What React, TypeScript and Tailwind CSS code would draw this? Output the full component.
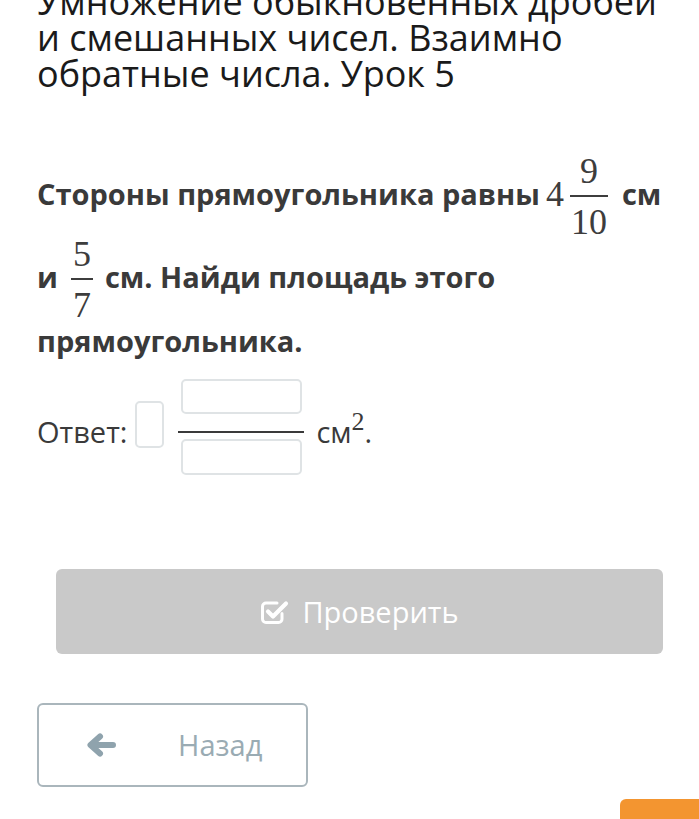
const sans = { fontFamily: '"Open Sans", "Noto Sans", sans-serif' };

function Frac({ top, bottom, w }: { top: string; bottom: string; w: string }) {
  return (
    <span className="inline-flex flex-col items-center font-['Liberation_Serif',serif] text-[36px] font-normal leading-[26px] text-[#3d3d3d]">
      <span className="pb-[11px]">{top}</span>
      <span className={`h-[2px] bg-[#3d3d3d] ${w}`} />
      <span className="pt-[12px]">{bottom}</span>
    </span>
  );
}

function CheckSquare() {
  return (
    <svg width="30" height="30" viewBox="0 0 30 30" fill="none">
      <path d="M22 16.5V22a3.5 3.5 0 0 1-3.5 3.5H6A3.5 3.5 0 0 1 2.5 22V9.5A3.5 3.5 0 0 1 6 6h11" stroke="white" strokeWidth="3" strokeLinecap="round" />
      <path d="M8 14.5l5 5L26 6.5" stroke="white" strokeWidth="4.2" strokeLinecap="round" strokeLinejoin="round" />
    </svg>
  );
}

function ArrowLeft() {
  return (
    <svg width="30" height="26" viewBox="0 0 30 26" fill="none">
      <path d="M27 13H6M14 4.5L4.5 13l9.5 8.5" stroke="#8fa3ad" strokeWidth="6" strokeLinecap="round" strokeLinejoin="round" />
    </svg>
  );
}

export default function App() {
  return (
    <div className="min-h-[819px] overflow-hidden bg-white" style={sans}>
      <div className="px-[37px]">
        <h1 className="mt-[-16px] text-[36px] font-normal leading-[36px] text-[#1a1a1a]">
          Умножение обыкновенных дробей и смешанных чисел. Взаимно обратные числа. Урок 5
        </h1>

        <div className="mt-[60px] whitespace-nowrap text-[29px] font-bold leading-[40px] text-[#3a3a3a]">
          <div className="flex items-center">
            <span className="shrink-0">Стороны прямоугольника равны</span>
            <span className="ml-[6px] shrink-0 font-['Liberation_Serif',serif] text-[36px] font-normal text-[#3d3d3d]">4</span>
            <span className="ml-[6px] shrink-0">
              <Frac top="9" bottom="10" w="w-[38px]" />
            </span>
            <span className="ml-[14px] shrink-0">см</span>
          </div>
          <div className="flex items-center">
            <span>и</span>
            <span className="ml-[13px]">
              <Frac top="5" bottom="7" w="w-[22px]" />
            </span>
            <span className="ml-[12px]">см. Найди площадь этого</span>
          </div>
          <div className="mt-[3px]">прямоугольника.</div>
        </div>

        <div className="mt-[18px] flex items-center text-[29px] leading-[40px] text-[#3a3a3a]">
          <span className="pt-[10px]">Ответ:</span>
          <span className="mb-[5px] ml-[8px] h-[47px] w-[29px] rounded-[5px] border-2 border-[#dfe3e5]" />
          <span className="ml-[14px] flex flex-col items-center">
            <span className="h-[35px] w-[121px] rounded-[5px] border-2 border-[#dfe3e5]" />
            <span className="mb-[6px] mt-[17px] h-[2px] w-[126px] bg-[#3a3a3a]" />
            <span className="h-[36px] w-[121px] rounded-[5px] border-2 border-[#dfe3e5]" />
          </span>
          <span className="ml-[12px] pt-[10px]">
            см<sup className="font-['Liberation_Serif',serif] text-[26px]">2</sup>.
          </span>
        </div>
      </div>

      <button className="ml-[56px] mt-[94px] flex h-[85px] w-[607px] items-center justify-center gap-[12px] rounded-[6px] bg-[#c9c9c9] text-[29px] text-white">
        <CheckSquare />
        <span>Проверить</span>
      </button>

      <button className="ml-[37px] mt-[49px] flex h-[84px] w-[271px] items-center rounded-[6px] border-2 border-[#aab6bc] text-[29px] text-[#9aabb3]">
        <span className="ml-[47px]">
          <ArrowLeft />
        </span>
        <span className="ml-[62px]">Назад</span>
      </button>

      <div className="mt-[12px] flex justify-end">
        <div className="h-[30px] w-[79px] rounded-tl-[6px] bg-[#f39530]" />
      </div>
    </div>
  );
}
